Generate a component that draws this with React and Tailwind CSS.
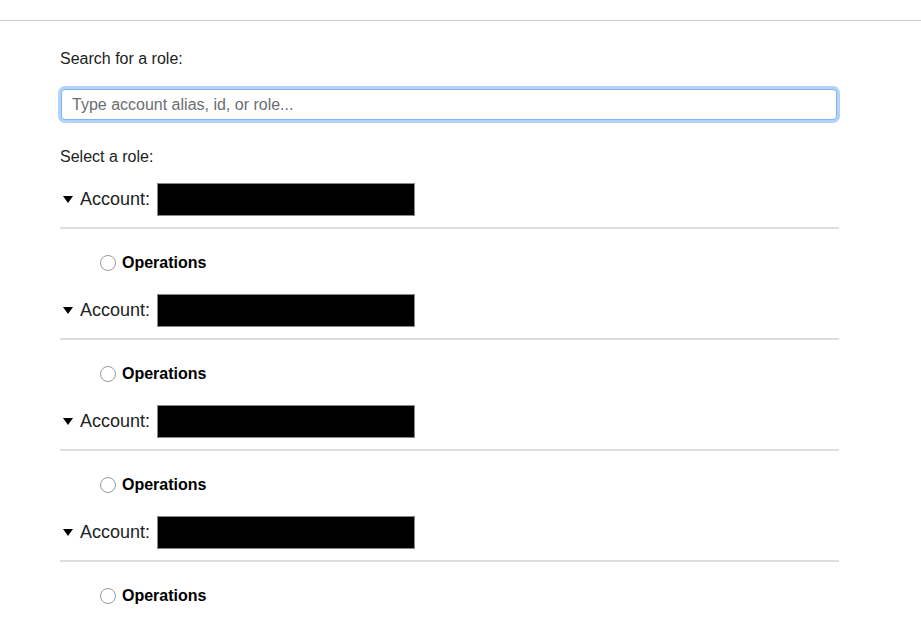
import React from 'react';

const accounts = [1, 2, 3, 4];

function AccountGroup() {
  return (
    <div>
      <div className="flex items-center h-[33px]">
        <svg width="10" height="7" viewBox="0 0 10 7" className="ml-[3px] mr-[7px]">
          <polygon points="0,0 10,0 5,7" fill="#000" />
        </svg>
        <span className="text-[18px] text-[#222]">Account:</span>
        <span className="ml-[7px] w-[258px] h-[33px] bg-black border border-[#888]" />
      </div>
      <div className="mt-[11px] h-[2px] bg-[#dedede]" />
      <div className="flex items-start h-[65px] pl-[40px] pt-[26px]">
        <span className="w-[16px] h-[16px] rounded-full border border-[#9a9a9a] bg-white" />
        <span className="ml-[6px] text-[16px] leading-[16px] font-bold text-black">Operations</span>
      </div>
    </div>
  );
}

export default function App() {
  return (
    <div className="min-h-[632px] bg-white font-['Liberation_Sans',Arial,sans-serif] text-[#222]">
      <div className="h-[21px] border-b border-[#cccccc]" />
      <div className="w-[780px] ml-[59px] pt-[26px]">
        <p className="text-[16px] leading-[24px] ml-[1px]">Search for a role:</p>
        <div className="mt-[15px] h-[37px] rounded-[7px] p-[3px] bg-[#b3d3f9] -ml-[1px] mr-[-1px]">
          <input
            type="text"
            placeholder="Type account alias, id, or role..."
            className="w-full h-full rounded-[4px] border border-[#7fb3f2] bg-white px-[10px] text-[16px] text-[#222] placeholder:text-[#6b6e72] outline-none"
          />
        </div>
        <p className="text-[16px] leading-[24px] mt-[22px] ml-[1px]">Select a role:</p>
        <div className="mt-[14px] ml-[1px] flex flex-col">
          {accounts.map((a) => (
            <AccountGroup key={a} />
          ))}
        </div>
      </div>
    </div>
  );
}
